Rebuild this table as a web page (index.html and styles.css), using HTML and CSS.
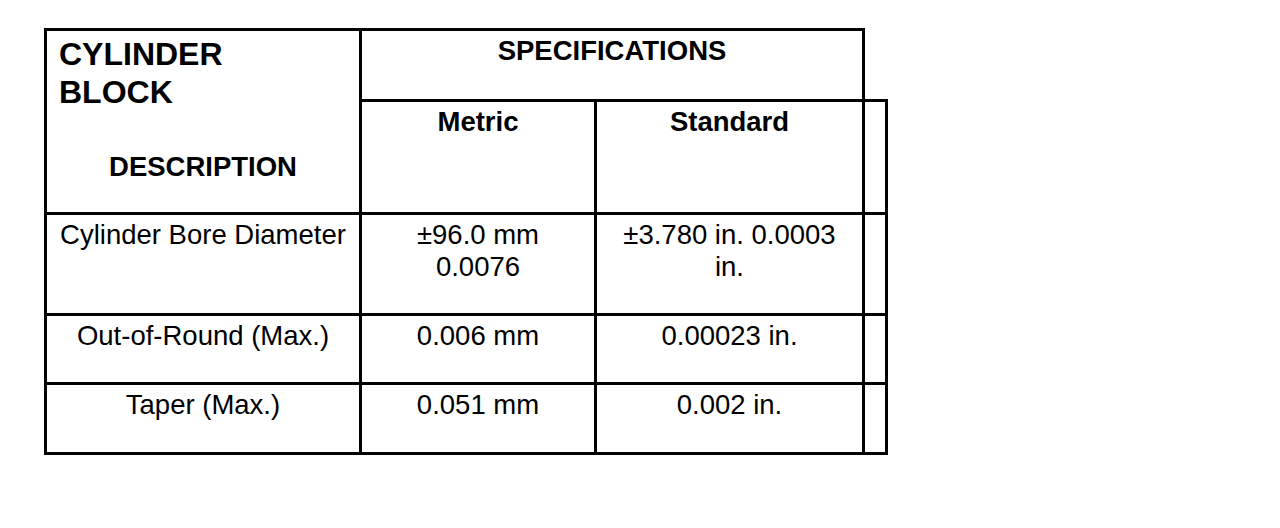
FILE: index.html
```html
<!DOCTYPE html>
<html lang="en">

<head>
    <meta charset="utf-8">
    <meta name="viewport" content="width=device-width, initial-scale=1.0">
    <title>Cylinder Block</title>

    <link rel="stylesheet" href="styles.css">

</head>

<body>

    <table class="spec">
        <colgroup>
            <col class="col-desc">
            <col class="col-metric">
            <col class="col-std">
            <col class="col-extra">
        </colgroup>
        <tr class="row-top">
            <th rowspan="2" class="desc-head">
                <div class="title">CYLINDER<br>BLOCK</div>
                <div class="desc">DESCRIPTION</div>
            </th>
            <th colspan="2">SPECIFICATIONS</th>
        </tr>
        <tr class="row-units">
            <th>Metric</th>
            <th>Standard</th>
            <td></td>
        </tr>
        <tr class="row-bore">
            <td>Cylinder Bore Diameter</td>
            <td>±96.0 mm<br>0.0076</td>
            <td>±3.780 in. 0.0003<br>in.</td>
            <td></td>
        </tr>
        <tr class="row-round">
            <td>Out-of-Round (Max.)</td>
            <td>0.006 mm</td>
            <td>0.00023 in.</td>
            <td></td>
        </tr>
        <tr class="row-taper">
            <td>Taper (Max.)</td>
            <td>0.051 mm</td>
            <td>0.002 in.</td>
            <td></td>
        </tr>
    </table>

</body>

</html>
```

FILE: styles.css
```css
body {
    margin: 0;
    background-color: white;
    color: black;
    font-family: "Liberation Sans", Arial, sans-serif;
}

.spec {
    margin: 28px 0 0 44px;
    width: 844px;
    table-layout: fixed;
    border-collapse: collapse;
    font-size: 27.5px;
}

.col-desc {
    width: 315px;
}

.col-metric {
    width: 235px;
}

.col-std {
    width: 268px;
}

.col-extra {
    width: 23px;
}

th,
td {
    border: 3px solid black;
    padding: 4px 0 0;
    vertical-align: top;
    text-align: center;
    line-height: normal;
}

th {
    font-weight: bold;
}

td {
    font-weight: normal;
}

.desc-head {
    text-align: left;
    padding: 4px 0 0 12px;
}

.title {
    font-size: 32px;
    line-height: 38px;
}

.desc {
    margin-top: 40px;
    padding-right: 12px;
    text-align: center;
}

.row-top {
    height: 71px;
}

.row-units {
    height: 113px;
}

.row-bore {
    height: 101px;
}

.row-round {
    height: 69px;
}

.row-taper {
    height: 70px;
}
```
